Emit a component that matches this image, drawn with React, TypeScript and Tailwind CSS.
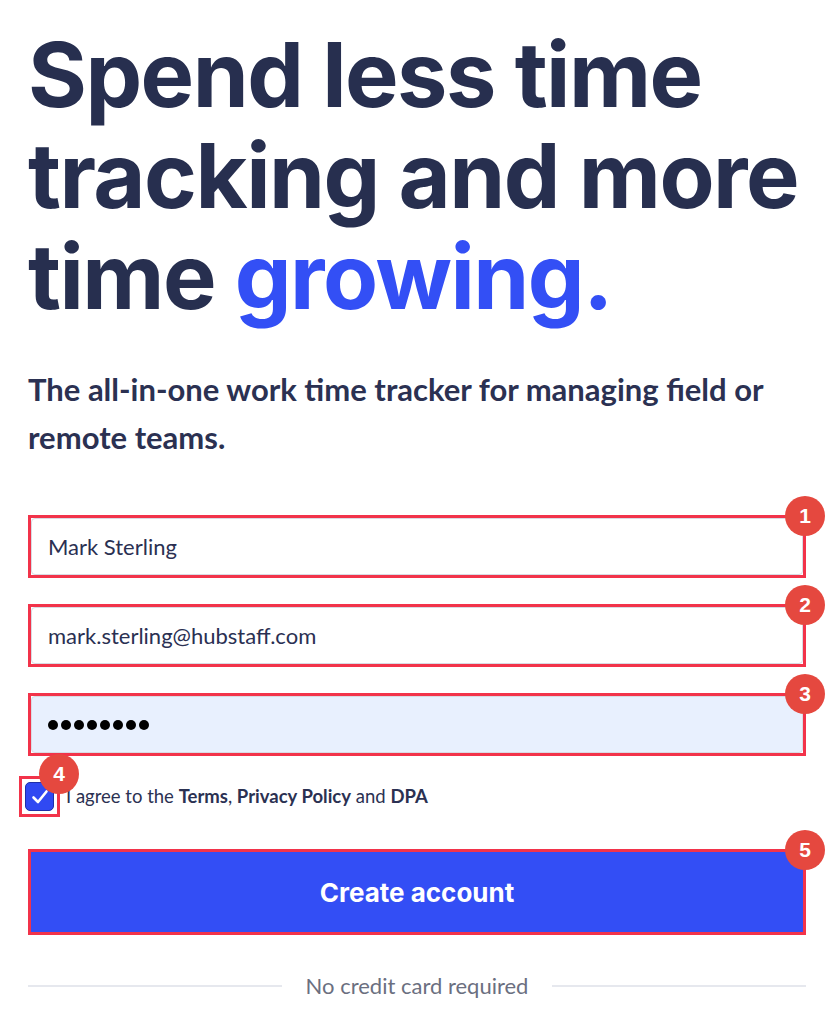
import React from "react";

function Badge({ n, className = "" }: { n: number; className?: string }) {
  return (
    <div
      className={
        "absolute w-10 h-10 rounded-full bg-[#e5483f] flex items-center justify-center text-white text-[21px] font-bold z-10 " +
        className
      }
      style={{ fontFamily: '"Liberation Sans", Arial, sans-serif' }}
    >
      {n}
    </div>
  );
}

function Field({ n, value, filled, password }: { n: number; value: string; filled?: boolean; password?: boolean }) {
  return (
    <div className="relative border-[3px] border-[#f2334a]">
      <div
        className={
          "h-[57px] rounded-[4px] border border-[#d8dbe3] flex items-center px-4 text-[22px] text-[#2a3052] " +
          (filled ? "bg-[#e8f0fe]" : "bg-white")
        }
      >
        {password ? (
          <span className="flex gap-[3px]">
            {Array.from({ length: 8 }).map((_, i) => (
              <span key={i} className="w-[10px] h-[10px] rounded-full bg-black inline-block" />
            ))}
          </span>
        ) : (
          value
        )}
      </div>
      <Badge n={n} className="-top-[22px] -right-[22px]" />
    </div>
  );
}

export default function App() {
  return (
    <div className="bg-white min-h-[1024px] px-7 pt-6" style={{ fontFamily: 'Lato, "Noto Sans", sans-serif' }}>
      <h1
        className="text-[90px] leading-[101px] font-bold text-[#272f4f] tracking-[-0.017em]"
        style={{ fontFamily: 'Inter, "Noto Sans", sans-serif' }}
      >
        Spend less time tracking and more time <span className="text-[#334ff5]">growing.</span>
      </h1>
      <p className="mt-[38px] text-[31px] leading-[48px] font-bold text-[#2b3152]">
        The all-in-one work time tracker for managing field or remote teams.
      </p>
      <div className="mt-[54px] flex flex-col gap-[26px]">
        <Field n={1} value="Mark Sterling" />
        <Field n={2} value="mark.sterling@hubstaff.com" />
        <Field n={3} value="" filled password />
      </div>
      <div className="mt-5 flex items-center">
        <div className="relative -ml-[9px] border-[3px] border-[#f2334a] p-[3px]">
          <div className="w-[29px] h-[29px] rounded-[5px] bg-[#3049f2] border border-[#1f2fa8] flex items-center justify-center">
            <svg width="20" height="20" viewBox="0 0 20 20" fill="none">
              <path d="M3.5 10.5l4.5 4.5L16.5 4.5" stroke="white" strokeWidth="2.6" strokeLinecap="round" strokeLinejoin="round" />
            </svg>
          </div>
          <Badge n={4} className="-top-[25px] -right-[22px]" />
        </div>
        <span className="ml-[6px] text-[18.5px] text-[#2b3152]">
          I agree to the <b>Terms</b>, <b>Privacy Policy</b> and <b>DPA</b>
        </span>
      </div>
      <div className="relative mt-[32px] border-[3px] border-[#f2334a]">
        <div
          className="h-[80px] bg-[#334ef5] flex items-center justify-center text-white text-[26px] font-bold"
          style={{ fontFamily: 'Inter, "Noto Sans", sans-serif' }}
        >
          Create account
        </div>
        <Badge n={5} className="-top-[22px] -right-[22px]" />
      </div>
      <div className="mt-[34px] flex items-center gap-6">
        <div className="flex-1 h-[2px] bg-[#e6e8ee]" />
        <span className="text-[22px] text-[#6b6f80]">No credit card required</span>
        <div className="flex-1 h-[2px] bg-[#e6e8ee]" />
      </div>
    </div>
  );
}
